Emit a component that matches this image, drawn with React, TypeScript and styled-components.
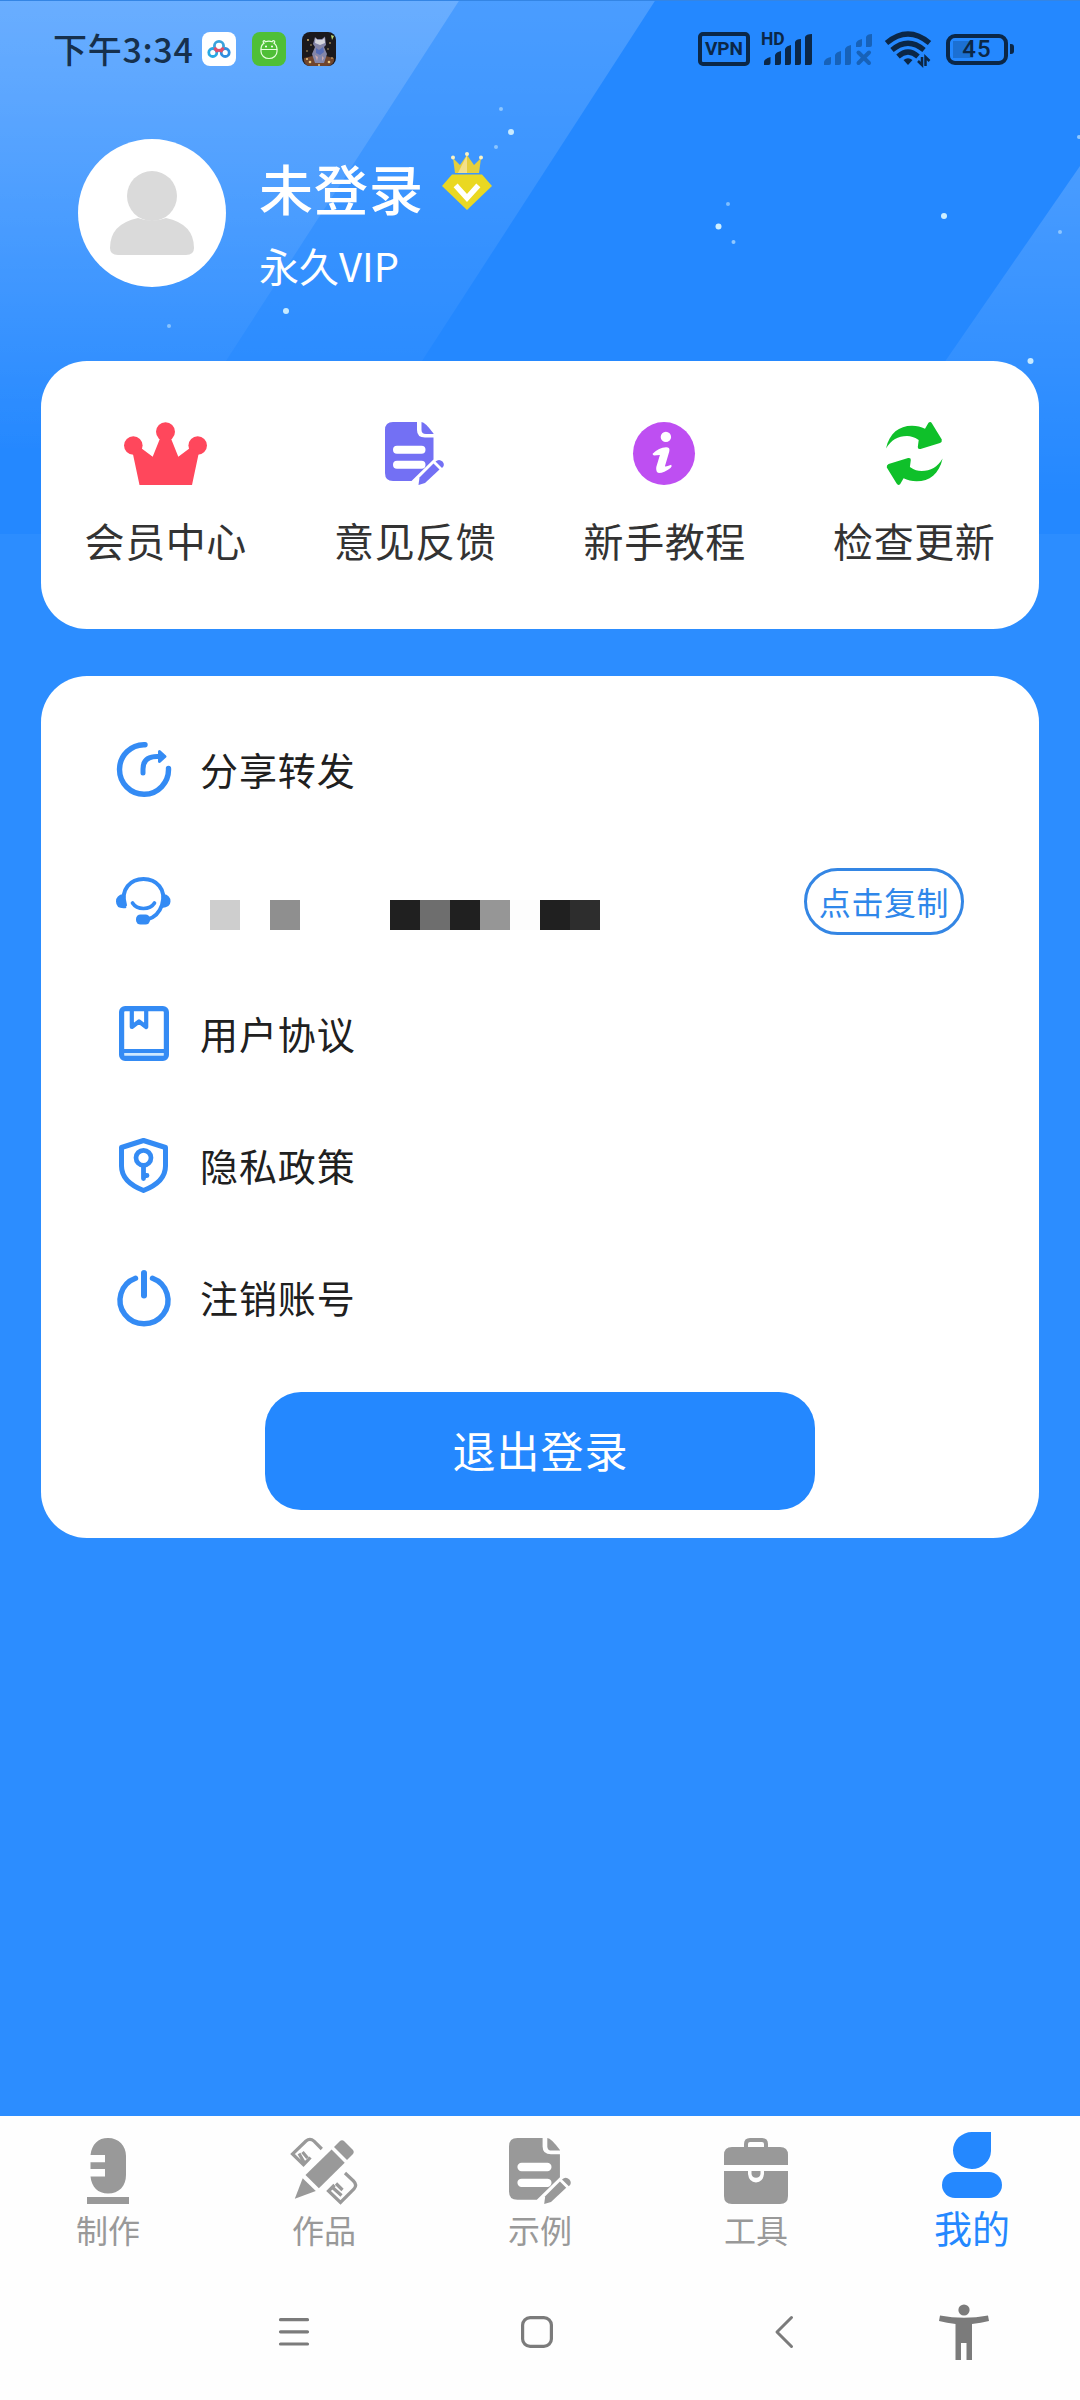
import React from "react";
import styled, { createGlobalStyle, css } from "styled-components";

const ink = "#0b2747";
const blue = "#2488ff";
const grey = "#999999";
const navGrey = "#7b7b7b";

const GlobalStyle = createGlobalStyle`
  * { box-sizing: border-box; }
  body { margin: 0; }
`;

const Screen = styled.div`
  position: relative;
  width: 1080px;
  height: 2400px;
  display: flex;
  flex-direction: column;
  overflow: hidden;
  background: #2c8dff;
  font-family: "Noto Sans CJK SC", sans-serif;
`;

const Backdrop = styled.svg`
  position: absolute;
  top: 0;
  left: 0;
  display: block;
`;

const Content = styled.div`
  position: relative;
  flex: 1;
  display: flex;
  flex-direction: column;
`;

const StatusBar = styled.header`
  height: 98px;
  padding: 0 66px 0 53px;
  display: flex;
  align-items: center;
  justify-content: space-between;
`;

const StatusGroup = styled.div<{ $gap: number }>`
  display: flex;
  align-items: center;
  gap: ${(p) => p.$gap}px;
`;

const Clock = styled.span`
  width: 133px;
  white-space: nowrap;
  font-size: 34px;
  line-height: 40px;
  font-weight: 500;
  letter-spacing: 0.7px;
  color: #16304d;
`;

const AppBadge = styled.svg`
  display: block;
  width: 34px;
  height: 34px;
`;

const VpnBadge = styled.span`
  width: 52px;
  height: 34px;
  display: flex;
  align-items: center;
  justify-content: center;
  border: 4px solid ${ink};
  border-radius: 5px;
  font: 700 19px/20px Roboto, sans-serif;
  color: ${ink};
`;

const SignalWrap = styled.div`
  display: flex;
  gap: 12px;
  margin-right: 13px;
  margin-left: 12px;
`;

const Glyph = styled.svg`
  display: block;
  flex: none;
  overflow: visible;
`;

const Battery = styled.div`
  display: flex;
  align-items: center;
  gap: 2px;
  margin-left: 15px;
`;

const BatteryBody = styled.div`
  width: 62px;
  height: 31px;
  display: flex;
  align-items: center;
  justify-content: center;
  border: 4px solid ${ink};
  border-radius: 9px;
  background: linear-gradient(#1c70d3, #1c70d3) 3px 3px / 20px 17px no-repeat;
  font: 500 24px/24px Roboto, sans-serif;
  letter-spacing: 1px;
  color: ${ink};
`;

const BatteryNub = styled.div`
  width: 4px;
  height: 10px;
  border-radius: 0 3px 3px 0;
  background: ${ink};
`;

const Profile = styled.section`
  height: 263px;
  padding: 41px 0 0 78px;
  display: flex;
  gap: 33px;
`;

const Avatar = styled.div`
  width: 148px;
  height: 148px;
  display: flex;
  justify-content: center;
  padding-top: 32px;
  border-radius: 50%;
  background: #fff;
`;

const Identity = styled.div`
  padding-top: 17px;
  display: flex;
  flex-direction: column;
  gap: 20px;
  color: #fff;
`;

const NameRow = styled.div`
  height: 64px;
  display: flex;
  align-items: center;
  gap: 18px;
`;

const Name = styled.h1`
  margin: 0;
  font-size: 54px;
  line-height: 64px;
  font-weight: 500;
  letter-spacing: 1px;
`;

const VipBadge = styled(Glyph)`
  margin-bottom: 14px;
`;

const VipText = styled.p`
  margin: 0;
  font-size: 40px;
  line-height: 50px;
`;

const Card = styled.section`
  margin: 0 41px;
  border-radius: 46px;
  background: #fff;
`;

const ActionCard = styled(Card)`
  height: 268px;
  padding-top: 61px;
  display: grid;
  grid-template-columns: repeat(4, 1fr);
`;

const Action = styled.div`
  display: flex;
  flex-direction: column;
  align-items: center;
  gap: 30px;
`;

const ActionLabel = styled.span`
  font-size: 40px;
  line-height: 50px;
  letter-spacing: 0.6px;
  color: #333;
`;

const ListCard = styled(Card)`
  height: 862px;
  margin-top: 47px;
  padding-top: 27px;
  display: flex;
  flex-direction: column;
`;

const Row = styled.div`
  height: 132px;
  padding: 0 75px 0 66px;
  display: flex;
  align-items: center;
`;

const RowIcon = styled.div`
  width: 73px;
  margin-right: 20px;
  display: flex;
  justify-content: center;
`;

const RowLabel = styled.span`
  flex: 1;
  font-size: 38px;
  line-height: 50px;
  letter-spacing: 0.9px;
  color: #202020;
`;

const Mosaic = styled.div`
  flex: 1;
  display: flex;
  padding: 28px 0 0 10px;
`;

const Tile = styled.span<{ $tone: string }>`
  width: 30px;
  height: 30px;
  background: ${(p) => p.$tone};
`;

const CopyButton = styled.button`
  width: 160px;
  height: 67px;
  padding: 0;
  border: 3px solid #3486e4;
  border-radius: 34px;
  background: #fff;
  font: 400 32px/44px "Noto Sans CJK SC", sans-serif;
  letter-spacing: 0.6px;
  color: #2f87ea;
`;

const LogoutButton = styled.button`
  align-self: center;
  width: 550px;
  height: 118px;
  margin-top: 29px;
  padding: 0 0 4px 1px;
  border: 0;
  border-radius: 36px;
  background: ${blue};
  font: 400 43px/60px "Noto Sans CJK SC", sans-serif;
  letter-spacing: 1px;
  color: #fff;
`;

const TabBar = styled.nav`
  position: relative;
  height: 148px;
  display: grid;
  grid-template-columns: repeat(5, 1fr);
  background: #fefefe;
`;

const Tab = styled.div<{ $active?: boolean }>`
  display: flex;
  flex-direction: column;
  align-items: center;
  gap: 5px;
  padding-top: 22px;
  font-size: 32px;
  line-height: 40px;
  color: ${grey};
  ${(p) =>
    p.$active &&
    css`
      gap: 6px;
      padding-top: 16px;
      font-size: 38px;
      line-height: 46px;
      color: ${blue};
    `}
`;

const SystemNav = styled.footer`
  position: relative;
  height: 136px;
  padding-left: 279px;
  display: flex;
  align-items: center;
  background: #fefefe;
`;

const NavSlot = styled.div<{ $before: number }>`
  margin-left: ${(p) => p.$before}px;
`;

const stars: [number, number, number, number][] = [
  [501, 109, 2, 0.5],
  [511, 132, 3, 0.9],
  [496, 147, 2, 0.5],
  [286, 311, 3, 0.9],
  [169, 326, 2, 0.5],
  [728, 204, 2, 0.5],
  [718.5, 226.5, 3, 0.95],
  [733.5, 242, 2, 0.6],
  [944, 216, 3, 0.95],
  [1060, 232, 2, 0.5],
  [1079, 137, 2, 0.6],
  [1030.5, 361, 3, 0.9],
];

const HeaderBackdrop = () => (
  <Backdrop width="1080" height="534" viewBox="0 0 1080 534">
    <defs>
      <linearGradient id="beam" x1="0" y1="0" x2="0" y2="534" gradientUnits="userSpaceOnUse">
        <stop offset="0" stopColor="#fff" stopOpacity="0.175" />
        <stop offset="0.85" stopColor="#fff" stopOpacity="0" />
      </linearGradient>
      <linearGradient id="beamRight" x1="0" y1="166" x2="0" y2="534" gradientUnits="userSpaceOnUse">
        <stop offset="0" stopColor="#fff" stopOpacity="0.17" />
        <stop offset="0.9" stopColor="#fff" stopOpacity="0" />
      </linearGradient>
    </defs>
    <rect width="1080" height="534" fill={blue} />
    <path d="M0 0H459.5L114 534H0Z" fill="url(#beam)" />
    <path d="M0 0H655.5L310 534H0Z" fill="url(#beam)" />
    <path d="M1080 166V534H826Z" fill="url(#beamRight)" />
    <rect width="1080" height="1" fill="#3485e4" />
    {stars.map(([x, y, r, o]) => (
      <circle key={`${x}-${y}`} cx={x} cy={y} r={r} fill="#d8f4ff" opacity={o} />
    ))}
  </Backdrop>
);

const CloudApp = () => (
  <AppBadge viewBox="0 0 34 34">
    <rect width="34" height="34" rx="8" fill="#fff" />
    <g fill="none" strokeWidth="2.8">
      <circle cx="10.8" cy="20.5" r="4" stroke="#29a9e4" />
      <circle cx="23.2" cy="20.5" r="4" stroke="#2f8fdf" />
      <circle cx="17" cy="14" r="4.6" stroke="#3aa3dc" />
      <path d="M12.7 15.5a4.6 4.6 0 0 0 8.6 0M12.5 16.2L15.5 20M21.5 16.2L18.5 20" stroke="#e2506c" />
    </g>
  </AppBadge>
);

const DroidApp = () => (
  <AppBadge viewBox="0 0 34 34">
    <rect width="34" height="34" rx="8" fill="#4fbf37" />
    <g fill="none" stroke="#e7ffe0" strokeWidth="1.2">
      <path d="M9 17.5C9 14 10.5 12 12 11.2C10 9 12 7.8 13.5 9.8Q17 8.6 20 9.8C21.5 7.8 24 9 22 11.2C24 12.5 25 15 25 17.5Z" />
      <path d="M9 17.5V19.5A8 7 0 0 0 25 19.5V17.5" />
    </g>
    <circle cx="14" cy="14.4" r="1" fill="#fff" />
    <circle cx="20" cy="14.4" r="1" fill="#fff" />
  </AppBadge>
);

const GameApp = () => (
  <AppBadge viewBox="0 0 34 34">
    <rect width="34" height="34" rx="8" fill="#1b191d" />
    <path d="M2 26Q17 21 32 26V29Q30 34 25 34H9Q3 34 2 29Z" fill="#70452d" />
    <path d="M13 5L15 7H20L23 4.500L24 13L22 15L25 22L22 31H13L10 22L13 15L11 12Z" fill="#8486a8" />
    <path d="M13.500 6L15.500 8H20L22.500 6L23 11L18 13L13 11Z" fill="#d4d5dc" />
    <path d="M14 16L17 18L21 15L22 20L18 23L14 21Z" fill="#566db6" />
    <path d="M13 23L16 25L15 29ZM20 24L22 26L20 29Z" fill="#c9a7ad" />
    <g fill="#e8c880">
      <circle cx="6" cy="8" r="0.900" />
      <circle cx="9" cy="13" r="0.700" />
      <circle cx="28" cy="11" r="0.800" />
      <circle cx="26" cy="17" r="0.700" />
      <circle cx="5" cy="19" r="0.700" />
      <circle cx="8" cy="30" r="1.300" />
      <circle cx="27" cy="30" r="1.300" />
      <circle cx="17" cy="33" r="1" />
      <circle cx="5" cy="27" r="1" />
      <circle cx="30" cy="26" r="0.800" />
    </g>
    <path d="M29 3L32 4L30 8Z" fill="#b9d878" />
  </AppBadge>
);

const SignalFull = () => (
  <Glyph width="50" height="34" viewBox="0 0 50 34" fill={ink}>
    <text x="-1" y="13" fontFamily="Roboto, sans-serif" fontSize="17.5" fontWeight="700">HD</text>
    <path d="M2 33V30Q2 27 8.500 25V31Q8.500 33 6.500 33ZM13 33V23Q14 20 19 19V31Q19 33 17 33ZM23 33V17Q24 14 29 13V31Q29 33 27 33ZM33 33V10Q34 7 39 7V31Q39 33 37 33ZM43 33V5Q44 2 50 2V31Q50 33 48 33Z" />
  </Glyph>
);

const SignalNone = () => (
  <Glyph width="48" height="34" viewBox="0 0 48 34" fill="#1762b9">
    <path d="M0 33V30Q1 26 7 25V31Q7 33 5 33ZM11 33V23Q12 20 17 19V31Q17 33 15 33ZM21 33V17Q22 14 27 13V31Q27 33 25 33ZM32 15V11Q33 8 38 7V13Q38 15 36 15ZM42 15V5Q43 2 48 2V13Q48 15 46 15Z" />
    <path d="M34.500 20.500L45 31M45 20.500L34.500 31" stroke="#1762b9" strokeWidth="4" strokeLinecap="round" />
  </Glyph>
);

const Wifi = () => (
  <Glyph width="46" height="36" viewBox="0 0 46 36">
    <g fill="none" stroke={ink} strokeWidth="5.200">
      <path d="M1.500 12Q23 -6 44.500 12" />
      <path d="M7 19Q23 5.500 39 19" />
      <path d="M13 25.500Q23 16.500 33 25.500" />
    </g>
    <path d="M18.500 29Q23 25.500 27.500 29L23 34Z" fill={ink} />
    <path d="M33 30L37 34V26M44.500 30L40.500 26V35" fill="none" stroke={ink} strokeWidth="2.500" />
  </Glyph>
);

const Crown = () => (
  <Glyph width="83" height="63" viewBox="0 0 83 63" fill="#ff475c">
    <circle cx="9.300" cy="23.500" r="9.300" />
    <circle cx="41.500" cy="9.700" r="9.500" />
    <circle cx="73.700" cy="23.500" r="9.300" />
    <path d="M8.500 30L17 26L28.700 34.700L37 14H46L54.300 34.700L66 26L75 30L68 63H15.500Z" />
  </Glyph>
);

const DocPen = ({ color, width, height }: { color: string; width: number; height: number }) => (
  <Glyph width={width} height={height} viewBox="0 0 60 63" preserveAspectRatio="none">
    <path d="M8 0H32V8Q32 15.500 40 15.500H48.500V37.500L26.500 59H8Q0 59 0 51V8Q0 0 8 0Z" fill={color} />
    <path d="M36.500 0Q40 0 48.500 11.500V12H41Q36.500 12 36.500 8Z" fill={color} />
    <path d="M12 27.700H36.500M12 42.800H36.500" stroke="#fff" strokeWidth="8" strokeLinecap="round" />
    <path d="M33.500 63L34.500 55.500L48.500 41.500L54.500 47.500L40 61Z" fill={color} />
    <path d="M50.500 39.500Q54 36.500 57.500 39.500Q60.500 43 57 46Z" fill={color} />
  </Glyph>
);

const Info = () => (
  <Glyph width="64" height="63" viewBox="0 0 64 63">
    <ellipse cx="31" cy="31.500" rx="31" ry="31.500" fill="#be4ff2" />
    <circle cx="32.900" cy="14.900" r="5.200" fill="#fff" />
    <path d="M19.600 31.800Q26 25.700 33 25.300Q37.500 25.200 36.200 29.700L32 44Q32 45.500 38.200 42.700Q39.500 44 37.500 46Q31 51 26 51Q22.500 50.500 23.300 45L26.900 33L21 33.500Q19.500 33 19.600 31.800Z" fill="#fff" />
  </Glyph>
);

const arrow = "M0 26.500C3.500 11 13 3.700 26 3.700C31 3.700 35 5 39 6.700L42.500 0.800Q44.500 -1 46 1.500L55.800 17.500Q56.300 20 54 21L34.500 27Q31.500 27.500 31.800 25L32.700 18C28 15 25 14 21 14C12 14 5 18 0 26.500Z";

const Refresh = () => (
  <Glyph width="56" height="63" viewBox="0 0 56 63" fill="#0fc02a">
    <path d={arrow} />
    <path d={arrow} transform="rotate(180 28.300 31.500)" />
  </Glyph>
);

const line = { fill: "none", stroke: "#348bf4", strokeLinecap: "round" as const, strokeLinejoin: "round" as const };

const ShareIcon = () => (
  <Glyph width="54" height="55" viewBox="0 0 54 55">
    <path d="M28 2.700A24.500 24.800 0 1 0 51.500 26.500" strokeWidth="5.400" {...line} />
    <path d="M26 31V27Q26 14.500 40 14.500H43" strokeWidth="5" {...line} />
    <path d="M42.500 9.500L48 14.500L42.500 19.500Z" strokeWidth="3" {...line} fill="#348bf4" />
  </Glyph>
);

const HeadsetIcon = () => (
  <Glyph width="55" height="48" viewBox="0 0 55 48">
    <path d="M9 28C4 12 15 2 27.500 2C40 2 51 12 46 28Q42 40 31 42.500" strokeWidth="4" {...line} />
    <path d="M10.500 31Q0 32.500 0 24.500Q0 18 7.500 17Q7 25 10.500 31ZM47.500 17Q54.500 18 54.500 24.500Q54.500 30 46 31Q49 24 47.500 17Z" fill="#348bf4" />
    <path d="M16.500 26Q20 31.500 27.500 31.500Q35 31.500 38.500 26" strokeWidth="3.700" {...line} />
    <rect x="20" y="37.500" width="14" height="10" rx="4.500" fill="#348bf4" />
  </Glyph>
);

const BookIcon = () => (
  <Glyph width="50" height="55" viewBox="0 0 50 55">
    <rect x="3" y="46" width="44" height="5.500" fill="#cfe9ff" />
    <rect x="2.600" y="2.600" width="44.800" height="49.800" rx="3.500" strokeWidth="5.200" {...line} />
    <path d="M3 45H47" strokeWidth="4.200" {...line} />
    <path d="M12.800 3V21L20 15.500L27.200 21V3" strokeWidth="4.200" {...line} />
  </Glyph>
);

const ShieldIcon = () => (
  <Glyph width="49" height="55" viewBox="0 0 49 55">
    <path d="M24.500 2.500L46.500 9.500V28C46.500 41 36 48 24.500 52.500C13 48 2.500 41 2.500 28V9.500Z" strokeWidth="5" {...line} />
    <circle cx="24.500" cy="19.800" r="7.500" strokeWidth="4.700" {...line} />
    <path d="M24.500 29V40.500M26 37.500H28" strokeWidth="4.800" {...line} />
  </Glyph>
);

const PowerIcon = () => (
  <Glyph width="53" height="55" viewBox="0 0 53 55">
    <path d="M18.500 8.300A24 23.500 0 1 0 35.500 8.300" strokeWidth="5.400" {...line} />
    <path d="M27 3V25.500" strokeWidth="6" {...line} />
  </Glyph>
);

const MicTab = () => (
  <Glyph width="42" height="66" viewBox="0 0 42 66" fill={grey}>
    <path d="M3.500 17C5 6 11 0 21 0C32 0 39 8 39 18V37C39 48 32 55.500 21 55.500C11 55.500 4.500 49 3.500 38.500H18V31H3.500V24.300H18V17Z" />
    <rect y="59" width="42" height="7" />
  </Glyph>
);

const DesignTab = () => (
  <Glyph width="66" height="66" viewBox="0 0 66 66">
    <g fill={grey}>
      <path d="M43 9L48.500 3.500Q51 1 53.500 3.500L61.500 11.500Q64 14 61.500 16.500L56 22Z" />
      <path d="M40.600 11.500L53.700 24.700L27.900 50.300L14.500 37Z" />
      <path d="M11.700 40.300L24.800 53L3.800 60.700Z" />
    </g>
    <g fill="none" stroke={grey} strokeWidth="3.200">
      <path d="M30.800 11L23 3.200Q19 -0.500 15 3L1.500 16L12.500 26.700L19.500 19.500M8 15.500L13.500 25M11.500 14L16.500 20" />
      <path d="M54 35L62.500 43Q66.500 47 63 51L49.500 64.500L37.500 53L43.500 47M41 49L50.500 57.500M45 45.500L51.500 52" />
    </g>
  </Glyph>
);

const CaseTab = () => (
  <Glyph width="64" height="66" viewBox="0 0 64 66">
    <path d="M22 11V6Q22 2 26 2H38Q42 2 42 6V11" fill="none" stroke={grey} strokeWidth="4" />
    <path d="M0 27V17Q0 9 8 9H56Q64 9 64 17V27Z" fill={grey} />
    <path d="M0 33H24V36Q25 44 32 44.500Q39 44 40 36V33H64V58Q64 66 56 66H8Q0 66 0 58Z" fill={grey} />
    <path d="M27.500 33H36.500V36Q36 39.500 32 39.700Q28 39.500 27.500 36Z" fill={grey} />
  </Glyph>
);

const UserTab = () => (
  <Glyph width="60" height="66" viewBox="0 0 60 66" fill={blue}>
    <path d="M30 0H49V19A19 18.500 0 1 1 30 0Z" />
    <rect y="40" width="60" height="26" rx="13" />
  </Glyph>
);

const actions = [
  { label: "会员中心", icon: <Crown /> },
  { label: "意见反馈", icon: <DocPen color="#7370f4" width={60} height={63} /> },
  { label: "新手教程", icon: <Info /> },
  { label: "检查更新", icon: <Refresh /> },
];

const tiles = [
  "#cecece", "transparent", "#8f8f8f", "transparent", "transparent", "transparent",
  "#202020", "#6e6e6e", "#202020", "#969696", "#fdfdfd", "#202020", "#2d2d2d",
];

const tabs = [
  { label: "制作", icon: <MicTab /> },
  { label: "作品", icon: <DesignTab /> },
  { label: "示例", icon: <DocPen color={grey} width={63} height={66} /> },
  { label: "工具", icon: <CaseTab /> },
  { label: "我的", icon: <UserTab />, active: true },
];

const MenuRow = ({ icon, label }: { icon: React.ReactNode; label: string }) => (
  <Row>
    <RowIcon>{icon}</RowIcon>
    <RowLabel>{label}</RowLabel>
  </Row>
);

export default function App() {
  return (
    <Screen>
      <GlobalStyle />
      <HeaderBackdrop />
      <Content>
        <StatusBar>
          <StatusGroup $gap={16}>
            <Clock>下午3:34</Clock>
            <CloudApp />
            <DroidApp />
            <GameApp />
          </StatusGroup>
          <StatusGroup $gap={0}>
            <VpnBadge>VPN</VpnBadge>
            <SignalWrap>
              <SignalFull />
              <SignalNone />
            </SignalWrap>
            <Wifi />
            <Battery>
              <BatteryBody>45</BatteryBody>
              <BatteryNub />
            </Battery>
          </StatusGroup>
        </StatusBar>

        <Profile>
          <Avatar>
            <Glyph width="84" height="84" viewBox="0 0 84 84" fill="#dadada">
              <circle cx="42" cy="25" r="25" />
              <path d="M28 47Q42 52 56 47Q84 53 84 77Q84 84 76 84H8Q0 84 0 77Q0 53 28 47Z" />
            </Glyph>
          </Avatar>
          <Identity>
            <NameRow>
              <Name>未登录</Name>
              <VipBadge width="50" height="58" viewBox="0 0 50 58">
                <path d="M11 6L18 13L25 3L32 13L39 6L37 21H13Z" fill="#e5cf3c" />
                <path d="M25 3V21H16Z" fill="#f3e08a" />
                <circle cx="11" cy="5.500" r="2" fill="#fbf3c4" />
                <circle cx="25" cy="2" r="2" fill="#fbf3c4" />
                <circle cx="39" cy="5.500" r="2" fill="#fbf3c4" />
                <path d="M10 22.500H40L50 34L25 58L0 34Z" fill="#ead822" />
                <path d="M15.500 35.500L25 46L34.500 35.500" fill="none" stroke="#fff" strokeWidth="5.500" strokeLinecap="square" />
              </VipBadge>
            </NameRow>
            <VipText>永久VIP</VipText>
          </Identity>
        </Profile>

        <ActionCard>
          {actions.map((a) => (
            <Action key={a.label}>
              {a.icon}
              <ActionLabel>{a.label}</ActionLabel>
            </Action>
          ))}
        </ActionCard>

        <ListCard>
          <MenuRow icon={<ShareIcon />} label="分享转发" />
          <Row>
            <RowIcon><HeadsetIcon /></RowIcon>
            <Mosaic>
              {tiles.map((tone, i) => (
                <Tile key={i} $tone={tone} />
              ))}
            </Mosaic>
            <CopyButton>点击复制</CopyButton>
          </Row>
          <MenuRow icon={<BookIcon />} label="用户协议" />
          <MenuRow icon={<ShieldIcon />} label="隐私政策" />
          <MenuRow icon={<PowerIcon />} label="注销账号" />
          <LogoutButton>退出登录</LogoutButton>
        </ListCard>
      </Content>

      <TabBar>
        {tabs.map((t) => (
          <Tab key={t.label} $active={t.active}>
            {t.icon}
            {t.label}
          </Tab>
        ))}
      </TabBar>

      <SystemNav>
        <NavSlot $before={0}>
          <Glyph width="30" height="28" viewBox="0 0 30 28">
            <path d="M1.500 1.700H28.500M1.500 13.800H28.500M1.500 26H28.500" stroke={navGrey} strokeWidth="3.200" strokeLinecap="round" />
          </Glyph>
        </NavSlot>
        <NavSlot $before={212}>
          <Glyph width="32" height="32" viewBox="0 0 32 32">
            <rect x="1.600" y="1.600" width="28.800" height="28.800" rx="7.500" fill="none" stroke={navGrey} strokeWidth="3.200" />
          </Glyph>
        </NavSlot>
        <NavSlot $before={222}>
          <Glyph width="18" height="32" viewBox="0 0 18 32">
            <path d="M16.500 1.500L2 16L16.500 30.500" fill="none" stroke={navGrey} strokeWidth="3" strokeLinecap="round" strokeLinejoin="round" />
          </Glyph>
        </NavSlot>
        <NavSlot $before={146}>
          <Glyph width="50" height="56" viewBox="0 0 50 56" fill={navGrey}>
            <circle cx="25" cy="6" r="5.600" />
            <path d="M1 11.500Q25 16 49 11.500L50 17Q42 19 33 20V56H27.500V39H22V56H16.500V20Q8 19 0 17Z" />
          </Glyph>
        </NavSlot>
      </SystemNav>
    </Screen>
  );
}
